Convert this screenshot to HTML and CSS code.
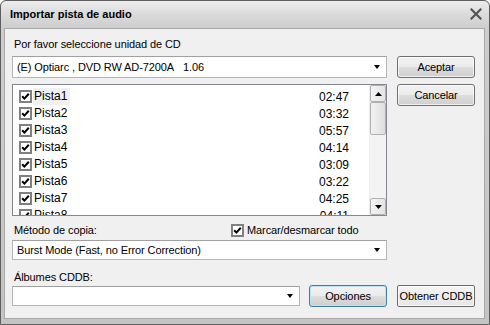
FILE: index.html
```html
<!DOCTYPE html>
<html>
<head>
<meta charset="utf-8">
<link rel="stylesheet" href="styles.css">
</head>
<body>
<div class="window">
  <div class="titlebar">
    <span class="title">Importar pista de audio</span>
    <svg class="close" width="12" height="12" viewBox="0 0 12 12"><path d="M1.5 1.5 L10.5 10.5 M10.5 1.5 L1.5 10.5" stroke="#555" stroke-width="2.2" stroke-linecap="square"/></svg>
  </div>
  <div class="client">
    <div class="label first">Por favor seleccione unidad de CD</div>
    <div class="row top-row">
      <div class="combo drive"><span>(E) Optiarc , DVD RW AD-7200A&nbsp;&nbsp;&nbsp;1.06</span><i class="arrow"></i></div>
      <button class="btn">Aceptar</button>
    </div>
    <div class="row list-row">
      <div class="list">
        <div class="items">
          <div class="item"><svg class="cb" width="13" height="13" viewBox="0 0 13 13"><rect x="1" y="1" width="11" height="11" fill="#fff" stroke="#808080" stroke-width="2"/><path d="M3.2 6.2 L5.4 8.6 L9.8 3.8" fill="none" stroke="#000" stroke-width="2"/></svg><span class="name sel">Pista1</span><span class="time">02:47</span></div>
          <div class="item"><svg class="cb" width="13" height="13" viewBox="0 0 13 13"><rect x="1" y="1" width="11" height="11" fill="#fff" stroke="#808080" stroke-width="2"/><path d="M3.2 6.2 L5.4 8.6 L9.8 3.8" fill="none" stroke="#000" stroke-width="2"/></svg><span class="name">Pista2</span><span class="time">03:32</span></div>
          <div class="item"><svg class="cb" width="13" height="13" viewBox="0 0 13 13"><rect x="1" y="1" width="11" height="11" fill="#fff" stroke="#808080" stroke-width="2"/><path d="M3.2 6.2 L5.4 8.6 L9.8 3.8" fill="none" stroke="#000" stroke-width="2"/></svg><span class="name">Pista3</span><span class="time">05:57</span></div>
          <div class="item"><svg class="cb" width="13" height="13" viewBox="0 0 13 13"><rect x="1" y="1" width="11" height="11" fill="#fff" stroke="#808080" stroke-width="2"/><path d="M3.2 6.2 L5.4 8.6 L9.8 3.8" fill="none" stroke="#000" stroke-width="2"/></svg><span class="name">Pista4</span><span class="time">04:14</span></div>
          <div class="item"><svg class="cb" width="13" height="13" viewBox="0 0 13 13"><rect x="1" y="1" width="11" height="11" fill="#fff" stroke="#808080" stroke-width="2"/><path d="M3.2 6.2 L5.4 8.6 L9.8 3.8" fill="none" stroke="#000" stroke-width="2"/></svg><span class="name">Pista5</span><span class="time">03:09</span></div>
          <div class="item"><svg class="cb" width="13" height="13" viewBox="0 0 13 13"><rect x="1" y="1" width="11" height="11" fill="#fff" stroke="#808080" stroke-width="2"/><path d="M3.2 6.2 L5.4 8.6 L9.8 3.8" fill="none" stroke="#000" stroke-width="2"/></svg><span class="name">Pista6</span><span class="time">03:22</span></div>
          <div class="item"><svg class="cb" width="13" height="13" viewBox="0 0 13 13"><rect x="1" y="1" width="11" height="11" fill="#fff" stroke="#808080" stroke-width="2"/><path d="M3.2 6.2 L5.4 8.6 L9.8 3.8" fill="none" stroke="#000" stroke-width="2"/></svg><span class="name">Pista7</span><span class="time">04:25</span></div>
          <div class="item"><svg class="cb" width="13" height="13" viewBox="0 0 13 13"><rect x="1" y="1" width="11" height="11" fill="#fff" stroke="#808080" stroke-width="2"/><path d="M3.2 6.2 L5.4 8.6 L9.8 3.8" fill="none" stroke="#000" stroke-width="2"/></svg><span class="name">Pista8</span><span class="time">04:11</span></div>
        </div>
        <div class="scrollbar">
          <div class="sbtn"><svg width="7" height="4" viewBox="0 0 7 4"><path d="M3.5 0 L7 4 L0 4 Z" fill="#000"/></svg></div>
          <div class="thumb"></div>
          <div class="track"></div>
          <div class="sbtn"><svg width="7" height="4" viewBox="0 0 7 4"><path d="M0 0 L7 0 L3.5 4 Z" fill="#000"/></svg></div>
        </div>
      </div>
      <button class="btn">Cancelar</button>
    </div>
    <div class="row method-row">
      <span class="label">Método de copia:</span>
      <label class="check"><svg class="cb" width="13" height="13" viewBox="0 0 13 13"><rect x="1" y="1" width="11" height="11" fill="#fff" stroke="#808080" stroke-width="2"/><path d="M3.2 6.2 L5.4 8.6 L9.8 3.8" fill="none" stroke="#000" stroke-width="2"/></svg><span>Marcar/desmarcar todo</span></label>
    </div>
    <div class="row burst-row">
      <div class="combo method"><span>Burst Mode (Fast, no Error Correction)</span><i class="arrow"></i></div>
    </div>
    <div class="label albums">Álbumes CDDB:</div>
    <div class="row bottom-row">
      <div class="combo cddb"><span></span><i class="arrow"></i></div>
      <button class="btn default">Opciones</button>
      <button class="btn flat">Obtener CDDB</button>
    </div>
  </div>
</div>
</body>
</html>
```

FILE: styles.css
```css
* { box-sizing: border-box; }
html, body { margin: 0; padding: 0; }
body {
  width: 490px;
  height: 325px;
  overflow: hidden;
  font-family: "Liberation Sans", Arial, sans-serif;
  font-size: 11px;
  letter-spacing: -0.1px;
  color: #000;
  background: #fff;
}
.window {
  width: 490px;
  height: 325px;
  border: 1px solid #5e5e5e;
  border-radius: 6px 6px 0 0;
  padding: 0 4px 5px 3px;
  background: linear-gradient(#ececec 0px, #dadada 14px, #cdcdcd 28px, #c4c4c4 100%);
  display: flex;
  flex-direction: column;
}
.titlebar {
  height: 27px;
  flex: none;
  display: flex;
  align-items: center;
  justify-content: space-between;
  padding: 0 2px 2px 6px;
}
.title {
  font-weight: bold;
  font-size: 11px;
  color: #000;
  letter-spacing: 0;
}
.close { margin-right: 1px; margin-top: 1px; }
.client {
  flex: 1;
  background: #f0f0f0;
  border: 1px solid #a9a9a9;
  padding: 7px 9px 0 7px;
  display: flex;
  flex-direction: column;
}
.label { line-height: 14px; padding-left: 2px; }
.first { margin-top: 1px; }
.row { display: flex; }
.top-row { margin-top: 5px; height: 22px; gap: 10px; }
.combo {
  background: #fff;
  border: 1px solid #b5b5b5;
  border-top-color: #a0a0a0;
  display: flex;
  align-items: center;
  justify-content: space-between;
  padding: 0 5px 0 4px;
  line-height: 14px;
}
.arrow {
  width: 0; height: 0;
  border-left: 3.5px solid transparent;
  border-right: 3.5px solid transparent;
  border-top: 4px solid #000;
  margin-right: 1px;
}
.drive { width: 375px; }
.btn {
  width: 78px;
  height: 22px;
  font-family: inherit;
  font-size: 11px;
  letter-spacing: -0.1px;
  color: #000;
  border: 1px solid #707070;
  border-radius: 3px;
  background: linear-gradient(#f2f2f2 0%, #ebebeb 50%, #dddddd 51%, #cfcfcf 100%);
  box-shadow: inset 0 0 0 1px rgba(255,255,255,0.7);
  padding: 0;
  margin: 0;
}
.list-row { margin-top: 6px; gap: 10px; align-items: flex-start; }
.list {
  width: 375px;
  height: 132px;
  background: #fff;
  border: 1px solid #828790;
  display: flex;
}
.items {
  flex: 1;
  padding: 3px 0 0 6px;
  overflow: hidden;
}
.item {
  height: 17px;
  display: flex;
  align-items: center;
  flex: none;
}
.cb { flex: none; }
.name {
  margin-left: 1px;
  padding: 0 1px;
  height: 17px;
  line-height: 17px;
  width: 37px;
  font-size: 12px;
  letter-spacing: 0;
}
.sel { background: #f0f0f0; }
.time {
  margin-left: auto;
  margin-right: 20px;
  font-size: 12px;
  letter-spacing: 0;
}
.scrollbar {
  width: 17px;
  display: flex;
  flex-direction: column;
  background: #f3f3f3;
  border-left: 1px solid #ececec;
}
.sbtn {
  height: 17px;
  flex: none;
  border: 1px solid #b0b0b0;
  border-radius: 2px;
  background: linear-gradient(90deg, #f4f4f4, #e4e4e4);
  display: flex;
  align-items: center;
  justify-content: center;
}
.thumb {
  height: 33px;
  flex: none;
  border: 1px solid #b0b0b0;
  border-radius: 2px;
  background: linear-gradient(90deg, #f2f2f2, #dedede);
}
.track { flex: 1; }
.method-row {
  margin-top: 7px;
  height: 14px;
  align-items: center;
  line-height: 14px;
}
.method-row .label { width: 219px; }
.check { display: flex; align-items: center; gap: 3px; margin-left: 0; }
.burst-row { margin-top: 3px; }
.method { width: 375px; height: 20px; }
.albums { margin-top: 10px; }
.bottom-row { margin-top: 1px; align-items: center; }
.cddb { width: 288px; height: 20px; }
.default {
  margin-left: 9px;
  border-color: #3c7fb1;
  box-shadow: inset 0 0 0 1px #bde3f8;
}
.flat {
  margin-left: 10px;
  border-radius: 2px;
  border-color: #6a6a6a;
  background: linear-gradient(#f4f4f4, #e6e6e6);
}
```
